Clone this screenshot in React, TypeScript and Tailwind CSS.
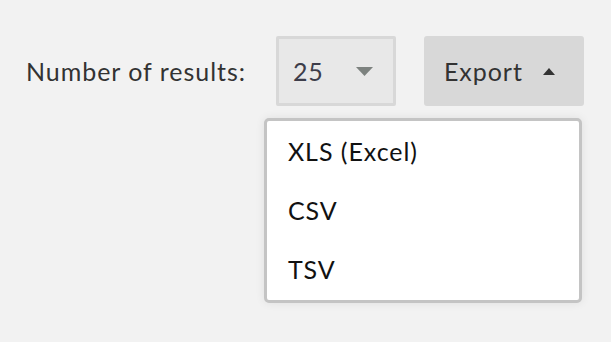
import { useState } from 'react';

const formats = ['XLS (Excel)', 'CSV', 'TSV'];

export default function App() {
  const [count] = useState(25);

  return (
    <div className="w-[611px] h-[342px] bg-[#f2f2f2] font-['Lato','Open_Sans',sans-serif] tracking-[0.06em] text-[#333]">
      <div className="flex items-center pt-[36px] pl-[26px]">
        <span className="text-[25px] leading-none mr-[30px]">Number of results:</span>

        <button className="flex items-center justify-between w-[120px] h-[70px] pl-[14px] pr-[20px] bg-[#e8e8e8] border-[3px] border-[#d8d8d8] rounded-[2px]">
          <span className="text-[25px] leading-none text-[#3d3d4a]">{count}</span>
          <svg width="17" height="9" viewBox="0 0 17 9">
            <path d="M0 0h17L8.5 9z" fill="#7d827f" />
          </svg>
        </button>

        <div className="relative ml-[28px]">
          <button className="flex items-center w-[160px] h-[70px] pl-[20px] bg-[#d8d8d8] rounded-[3px]">
            <span className="text-[25px] leading-none">Export</span>
            <svg className="ml-[20px]" width="12" height="7" viewBox="0 0 12 7">
              <path d="M0 7h12L6 0z" fill="#333" />
            </svg>
          </button>

          <ul className="absolute top-[82px] right-[2px] w-[318px] py-[1px] bg-white border-[3px] border-[#c4c4c4] rounded-[5px] shadow-[0_0_10px_rgba(0,0,0,0.08)]">
            {formats.map((f) => (
              <li key={f} className="h-[59px] flex items-center pl-[21px] text-[25px] leading-none text-[#111]">
                {f}
              </li>
            ))}
          </ul>
        </div>
      </div>
    </div>
  );
}
